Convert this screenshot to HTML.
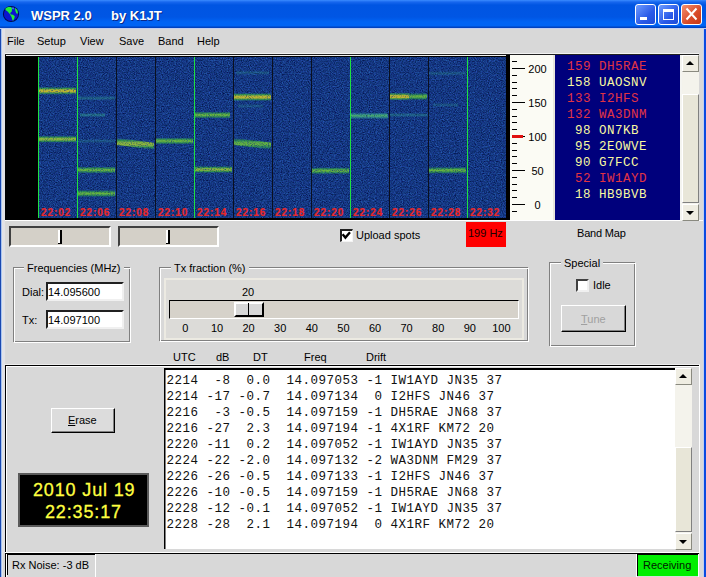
<!DOCTYPE html>
<html><head><meta charset="utf-8"><style>
*{box-sizing:border-box}
html,body{margin:0;padding:0}
body{width:706px;height:577px;overflow:hidden;position:relative;background:#d8d8d8;font-family:"Liberation Sans",sans-serif;font-size:11px;color:#000}
.a{position:absolute}
.t{position:absolute;white-space:pre;line-height:1}
.m{font-family:"Liberation Mono",monospace}
.lbl{font-family:"Liberation Sans",sans-serif;font-weight:bold;font-size:10px;letter-spacing:0.95px;color:#e82828;-webkit-text-stroke:0.2px #e82828}
</style></head><body>
<div class="a" style="left:0;top:0;width:706px;height:29px;background:linear-gradient(#3b8cff 0px,#1767ee 2px,#0055e2 5px,#0056e4 17px,#0063f4 22px,#0064f4 26px,#0042c0 27px,#0042c0 28px,#c2cdf0 28px,#c2cdf0 29px)"></div>
<div class="a" style="left:0px;top:29px;width:1px;height:548px;background:#1a48b0;"></div>
<div class="a" style="left:1px;top:29px;width:1px;height:548px;background:#a8c4f0;"></div>
<div class="a" style="left:2px;top:29px;width:3px;height:548px;background:#e2e2e6;"></div>
<div class="a" style="left:704px;top:29px;width:2px;height:548px;background:#0a4ae0;"></div>
<div class="a" style="left:703px;top:29px;width:1px;height:548px;background:#c0d0f0;"></div>
<div class="a" style="left:700px;top:29px;width:3px;height:548px;background:#d8d8d8;"></div>
<svg class="a" style="left:2px;top:5px" width="18" height="18" viewBox="0 0 18 18">
<circle cx="9" cy="9" r="8.1" fill="#000a50"/>
<circle cx="9" cy="9" r="7.1" fill="#0a14d0"/>
<path d="M3.4 3.6 L6 1.9 L9 1.9 L10 3.6 L9.8 6.6 L8.6 7.6 L8.2 8.4 L8.8 9.4 L11 9.8 L12.8 11.2 L12.4 13.2 L11 16 L10.2 14.4 L9.4 11.8 L7.4 8.6 L5.6 6.4 L3.6 5 Z" fill="#22ee3a"/>
<path d="M12.8 2.8 L15.4 5 L16 8.6 L14.4 8.6 L13.4 6 Z" fill="#22ee3a"/>
<path d="M10.4 2.4 L11.8 2.8 L11.2 4.4 L10.6 4 Z" fill="#70c0ff"/>
</svg>
<div class="t" style="left:31px;top:9px;font-size:13px;font-weight:bold;color:#fff;text-shadow:1px 1px 0 #0a2a8a">WSPR 2.0</div>
<div class="t" style="left:111px;top:9px;font-size:13px;font-weight:bold;color:#fff;text-shadow:1px 1px 0 #0a2a8a">by K1JT</div>
<div class="a" style="left:635px;top:4px;width:21px;height:21px;border:1px solid #fff;border-radius:3px;background:linear-gradient(135deg,#6e9cff,#2a5ae8 60%,#1d4cd8)"></div>
<div class="a" style="left:658px;top:4px;width:21px;height:21px;border:1px solid #fff;border-radius:3px;background:linear-gradient(135deg,#6e9cff,#2a5ae8 60%,#1d4cd8)"></div>
<div class="a" style="left:681px;top:4px;width:21px;height:21px;border:1px solid #fff;border-radius:3px;background:linear-gradient(135deg,#f49070,#d84a28 60%,#c83818)"></div>
<div class="a" style="left:640px;top:17px;width:7px;height:3px;background:#fff;"></div>
<div class="a" style="left:663px;top:9px;width:11px;height:11px;border:1px solid #fff;border-top:3px solid #fff"></div>
<svg class="a" style="left:681px;top:4px" width="21" height="21"><path d="M5.5 4.5 L15.5 15.5 M15.5 4.5 L5.5 15.5" stroke="#fff" stroke-width="2"/></svg>
<div class="t" style="left:7px;top:36px;">File</div>
<div class="t" style="left:37px;top:36px;">Setup</div>
<div class="t" style="left:80px;top:36px;">View</div>
<div class="t" style="left:119px;top:36px;">Save</div>
<div class="t" style="left:158px;top:36px;">Band</div>
<div class="t" style="left:197px;top:36px;">Help</div>
<div class="a" style="left:5px;top:53px;width:694px;height:1px;background:#f2f2f2;"></div>
<div class="a" style="left:5px;top:54px;width:694px;height:1px;background:#202020;"></div>
<div class="a" style="left:5px;top:55px;width:505px;height:165px;background:#000;"></div>
<div class="a" style="left:6px;top:55px;width:500px;height:1px;background:#f0f0f0;"></div>
<div class="a" style="left:39px;top:57px;width:467px;height:161px;background:#163a87;"></div>
<svg class="a" style="left:39px;top:57px" width="467" height="161"><filter id="nz" color-interpolation-filters="sRGB" x="0" y="0" width="100%" height="100%"><feTurbulence type="fractalNoise" baseFrequency="0.85" numOctaves="2" seed="7" stitchTiles="stitch"/><feColorMatrix type="matrix" values="0.2 0 0 0 -0.02  0.38 0.14 0 0 -0.045  0.6 0 0 0 0.205  0 0 0 0 1"/></filter><rect width="467" height="161" filter="url(#nz)"/></svg>
<svg class="a" style="left:0;top:0" width="706" height="230"><defs><linearGradient id="g3" x1="0" y1="0" x2="0" y2="1"><stop offset="0" stop-color="#32aa46" stop-opacity="0"/><stop offset=".2" stop-color="#40b43a" stop-opacity=".85"/><stop offset=".38" stop-color="#c8c82a" stop-opacity="1"/><stop offset=".62" stop-color="#d8c426" stop-opacity="1"/><stop offset=".8" stop-color="#40b43a" stop-opacity=".85"/><stop offset="1" stop-color="#32aa46" stop-opacity="0"/></linearGradient><linearGradient id="g2" x1="0" y1="0" x2="0" y2="1"><stop offset="0" stop-color="#32aa46" stop-opacity="0"/><stop offset=".2" stop-color="#3cb43c" stop-opacity=".8"/><stop offset=".4" stop-color="#9cc834" stop-opacity="1"/><stop offset=".6" stop-color="#9cc834" stop-opacity="1"/><stop offset=".8" stop-color="#3cb43c" stop-opacity=".8"/><stop offset="1" stop-color="#32aa46" stop-opacity="0"/></linearGradient><linearGradient id="g1" x1="0" y1="0" x2="0" y2="1"><stop offset="0" stop-color="#32aa46" stop-opacity="0"/><stop offset=".22" stop-color="#38b040" stop-opacity=".75"/><stop offset=".42" stop-color="#70c438" stop-opacity="1"/><stop offset=".58" stop-color="#70c438" stop-opacity="1"/><stop offset=".78" stop-color="#38b040" stop-opacity=".75"/><stop offset="1" stop-color="#32aa46" stop-opacity="0"/></linearGradient><linearGradient id="tm" x1="0" y1="0" x2="0" y2="1"><stop offset="0" stop-color="#30a8a0" stop-opacity="0"/><stop offset=".3" stop-color="#40b088" stop-opacity=".8"/><stop offset=".5" stop-color="#58c468" stop-opacity="1"/><stop offset=".7" stop-color="#40b088" stop-opacity=".8"/><stop offset="1" stop-color="#30a8a0" stop-opacity="0"/></linearGradient><linearGradient id="f1" x1="0" y1="0" x2="0" y2="1"><stop offset=".15" stop-color="#30a8a0" stop-opacity="0"/><stop offset=".5" stop-color="#38b090" stop-opacity="0.35"/><stop offset=".85" stop-color="#30a8a0" stop-opacity="0"/></linearGradient><linearGradient id="f2" x1="0" y1="0" x2="0" y2="1"><stop offset=".15" stop-color="#30a8a0" stop-opacity="0"/><stop offset=".5" stop-color="#38b090" stop-opacity="0.5"/><stop offset=".85" stop-color="#30a8a0" stop-opacity="0"/></linearGradient><linearGradient id="f3" x1="0" y1="0" x2="0" y2="1"><stop offset=".15" stop-color="#30a8a0" stop-opacity="0"/><stop offset=".5" stop-color="#38b090" stop-opacity="0.65"/><stop offset=".85" stop-color="#30a8a0" stop-opacity="0"/></linearGradient><filter id="sm" x="0" y="0" width="100%" height="100%" color-interpolation-filters="sRGB"><feTurbulence type="fractalNoise" baseFrequency="0.95" numOctaves="1" seed="11" result="t"/><feColorMatrix in="t" type="matrix" values="0 0 0 0 0  0 0 0 0 0  0 0 0 0 0  2.4 0 0 0 -0.25" result="m"/><feComposite in="SourceGraphic" in2="m" operator="in"/></filter></defs><g filter="url(#sm)" opacity=".88"><rect x="39" y="86.8" width="37" height="8" fill="url(#g3)"/><rect x="39" y="135.7" width="37" height="7" fill="url(#g2)"/><rect x="78" y="94.7" width="37" height="7" fill="url(#f2)"/><rect x="80" y="111.5" width="25" height="7" fill="url(#f3)"/><rect x="78" y="137.5" width="37" height="7" fill="url(#f1)"/><rect x="78" y="166.5" width="37" height="7" fill="url(#g1)"/><rect x="78" y="190.0" width="37" height="7" fill="url(#g1)"/><path d="M117 138.1 L154 142.7 L154 149.7 L117 145.1 Z" fill="url(#g2)"/><rect x="156" y="137.5" width="37" height="7" fill="url(#g1)"/><rect x="195" y="111.5" width="35" height="7" fill="url(#g1)"/><rect x="195" y="166.0" width="37" height="7" fill="url(#g2)"/><rect x="234" y="93.0" width="37" height="8" fill="url(#g3)"/><rect x="238" y="102.5" width="25" height="7" fill="url(#f1)"/><rect x="236" y="69.2" width="33" height="7" fill="url(#f1)"/><path d="M234 138.0 L271 142.5 L271 149.5 L234 145.0 Z" fill="url(#g1)"/><rect x="312" y="167.2" width="37" height="7" fill="url(#g1)"/><rect x="351" y="112.3" width="37" height="7" fill="url(#tm)"/><rect x="390" y="92.5" width="19" height="8" fill="url(#g3)"/><rect x="409" y="93.0" width="18" height="7" fill="url(#g1)"/><rect x="390" y="111.5" width="37" height="7" fill="url(#f2)"/><rect x="429" y="69.9" width="37" height="7" fill="url(#f1)"/><rect x="433" y="101.5" width="25" height="7" fill="url(#f1)"/><rect x="429" y="166.8" width="37" height="7" fill="url(#g1)"/></g></svg>
<div class="a" style="left:38px;top:57px;width:1px;height:161px;background:#1fe040;"></div>
<div class="a" style="left:77px;top:57px;width:1px;height:161px;background:#1fe040;"></div>
<div class="a" style="left:116px;top:57px;width:1px;height:161px;background:#0a1020;"></div>
<div class="a" style="left:155px;top:57px;width:1px;height:161px;background:#0a1020;"></div>
<div class="a" style="left:194px;top:57px;width:1px;height:161px;background:#1fe040;"></div>
<div class="a" style="left:233px;top:57px;width:1px;height:161px;background:#0a1020;"></div>
<div class="a" style="left:272px;top:57px;width:1px;height:161px;background:#0a1020;"></div>
<div class="a" style="left:311px;top:57px;width:1px;height:161px;background:#0a1020;"></div>
<div class="a" style="left:350px;top:57px;width:1px;height:161px;background:#1fe040;"></div>
<div class="a" style="left:389px;top:57px;width:1px;height:161px;background:#0a1020;"></div>
<div class="a" style="left:428px;top:57px;width:1px;height:161px;background:#0a1020;"></div>
<div class="a" style="left:467px;top:57px;width:1px;height:161px;background:#1fe040;"></div>
<div class="t lbl" style="left:41px;top:208px">22:02</div>
<div class="t lbl" style="left:80px;top:208px">22:06</div>
<div class="t lbl" style="left:119px;top:208px">22:08</div>
<div class="t lbl" style="left:158px;top:208px">22:10</div>
<div class="t lbl" style="left:197px;top:208px">22:14</div>
<div class="t lbl" style="left:236px;top:208px">22:16</div>
<div class="t lbl" style="left:275px;top:208px">22:18</div>
<div class="t lbl" style="left:314px;top:208px">22:20</div>
<div class="t lbl" style="left:353px;top:208px">22:24</div>
<div class="t lbl" style="left:392px;top:208px">22:26</div>
<div class="t lbl" style="left:431px;top:208px">22:28</div>
<div class="t lbl" style="left:470px;top:208px">22:32</div>
<div class="a" style="left:5px;top:220px;width:698px;height:1px;background:#ffffff;"></div>
<div class="a" style="left:510px;top:55px;width:45px;height:165px;background:#fbfbf4;"></div>
<div class="a" style="left:553px;top:55px;width:2px;height:165px;background:#e8e6dc;"></div>
<div class="a" style="left:512px;top:211px;width:5px;height:1px;background:#000;"></div>
<div class="a" style="left:512px;top:204px;width:13px;height:1px;background:#000;"></div>
<div class="a" style="left:512px;top:197px;width:5px;height:1px;background:#000;"></div>
<div class="a" style="left:512px;top:190px;width:5px;height:1px;background:#000;"></div>
<div class="a" style="left:512px;top:184px;width:5px;height:1px;background:#000;"></div>
<div class="a" style="left:512px;top:177px;width:5px;height:1px;background:#000;"></div>
<div class="a" style="left:512px;top:170px;width:13px;height:1px;background:#000;"></div>
<div class="a" style="left:512px;top:163px;width:5px;height:1px;background:#000;"></div>
<div class="a" style="left:512px;top:156px;width:5px;height:1px;background:#000;"></div>
<div class="a" style="left:512px;top:150px;width:5px;height:1px;background:#000;"></div>
<div class="a" style="left:512px;top:143px;width:5px;height:1px;background:#000;"></div>
<div class="a" style="left:512px;top:135px;width:11px;height:3px;background:#e01010;"></div>
<div class="a" style="left:523px;top:136px;width:2px;height:1px;background:#000;"></div>
<div class="a" style="left:512px;top:129px;width:5px;height:1px;background:#000;"></div>
<div class="a" style="left:512px;top:122px;width:5px;height:1px;background:#000;"></div>
<div class="a" style="left:512px;top:116px;width:5px;height:1px;background:#000;"></div>
<div class="a" style="left:512px;top:109px;width:5px;height:1px;background:#000;"></div>
<div class="a" style="left:512px;top:102px;width:13px;height:1px;background:#000;"></div>
<div class="a" style="left:512px;top:95px;width:5px;height:1px;background:#000;"></div>
<div class="a" style="left:512px;top:88px;width:5px;height:1px;background:#000;"></div>
<div class="a" style="left:512px;top:82px;width:5px;height:1px;background:#000;"></div>
<div class="a" style="left:512px;top:75px;width:5px;height:1px;background:#000;"></div>
<div class="a" style="left:512px;top:68px;width:13px;height:1px;background:#000;"></div>
<div class="a" style="left:512px;top:61px;width:5px;height:1px;background:#000;"></div>
<div class="t" style="left:517.5px;width:40px;text-align:center;top:63.9px">200</div>
<div class="t" style="left:517.5px;width:40px;text-align:center;top:97.9px">150</div>
<div class="t" style="left:517.5px;width:40px;text-align:center;top:131.9px">100</div>
<div class="t" style="left:517.5px;width:40px;text-align:center;top:165.9px">50</div>
<div class="t" style="left:517.5px;width:40px;text-align:center;top:199.9px">0</div>
<div class="a" style="left:555px;top:55px;width:125px;height:165px;background:#00007c;"></div>
<div class="a" style="left:680px;top:55px;width:2px;height:166px;background:#f4f4f0;"></div>
<div class="t m" style="left:567px;top:60.5px;font-size:12.5px;letter-spacing:0.5px;color:#e03444">159 DH5RAE</div>
<div class="t m" style="left:567px;top:76.5px;font-size:12.5px;letter-spacing:0.5px;color:#f8f8a0">158 UAOSNV</div>
<div class="t m" style="left:567px;top:92.5px;font-size:12.5px;letter-spacing:0.5px;color:#e03444">133 I2HFS</div>
<div class="t m" style="left:567px;top:108.5px;font-size:12.5px;letter-spacing:0.5px;color:#e03444">132 WA3DNM</div>
<div class="t m" style="left:567px;top:124.5px;font-size:12.5px;letter-spacing:0.5px;color:#f8f8a0"> 98 ON7KB</div>
<div class="t m" style="left:567px;top:140.5px;font-size:12.5px;letter-spacing:0.5px;color:#f8f8a0"> 95 2EOWVE</div>
<div class="t m" style="left:567px;top:156.5px;font-size:12.5px;letter-spacing:0.5px;color:#f8f8a0"> 90 G7FCC</div>
<div class="t m" style="left:567px;top:172.5px;font-size:12.5px;letter-spacing:0.5px;color:#e03444"> 52 IW1AYD</div>
<div class="t m" style="left:567px;top:188.5px;font-size:12.5px;letter-spacing:0.5px;color:#f8f8a0"> 18 HB9BVB</div>
<div class="a" style="left:682px;top:55px;width:17px;height:166px;background:#f4f3ec"></div>
<div class="a" style="left:682px;top:55px;width:17px;height:17px;background:#efede2;border:1px solid;border-color:#fff #8a8a80 #8a8a80 #fff"></div>
<svg class="a" style="left:686px;top:60px" width="8" height="6"><path d="M0 5 L4 1 L8 5Z" fill="#000"/></svg>
<div class="a" style="left:682px;top:204px;width:17px;height:17px;background:#efede2;border:1px solid;border-color:#fff #8a8a80 #8a8a80 #fff"></div>
<svg class="a" style="left:686px;top:210px" width="8" height="6"><path d="M0 1 L4 5 L8 1Z" fill="#000"/></svg>
<div class="a" style="left:682px;top:94px;width:17px;height:109px;background:#e8e6d8;border:1px solid;border-color:#fff #808080 #808080 #fff"></div>
<div class="a" style="left:9px;top:226px;width:102px;height:21px;background:#d4d0c8;border:2px solid;border-color:#404040 #fff #fff #404040"></div>
<div class="a" style="left:58px;top:230px;width:2px;height:14px;background:#fff;"></div>
<div class="a" style="left:60px;top:230px;width:2px;height:14px;background:#000;"></div>
<div class="a" style="left:58px;top:243px;width:4px;height:1px;background:#000;"></div>
<div class="a" style="left:118px;top:226px;width:101px;height:21px;background:#d4d0c8;border:2px solid;border-color:#404040 #fff #fff #404040"></div>
<div class="a" style="left:166px;top:230px;width:2px;height:14px;background:#fff;"></div>
<div class="a" style="left:168px;top:230px;width:2px;height:14px;background:#000;"></div>
<div class="a" style="left:166px;top:243px;width:4px;height:1px;background:#000;"></div>
<div class="a" style="left:340px;top:229px;width:13px;height:13px;background:#fff;border:2px solid;border-color:#202020 #f4f4f4 #f4f4f4 #202020;border-right-width:1px;border-bottom-width:1px"></div>
<svg class="a" style="left:340px;top:229px" width="13" height="13"><path d="M2.6 5.2 L5.4 8.6 L10 3.2" stroke="#000" stroke-width="2.3" fill="none"/></svg>
<div class="t" style="left:356px;top:230px;">Upload spots</div>
<div class="a" style="left:466px;top:222px;width:40px;height:25px;background:#ff0000;"></div>
<div class="t" style="left:468px;top:228px;color:#200000">199 Hz</div>
<div class="t" style="left:577px;top:228px;letter-spacing:-0.2px">Band Map</div>
<div class="a" style="left:13px;top:267px;width:117px;height:75px;border:1px solid #808080"></div>
<div class="a" style="left:14px;top:268px;width:117px;height:75px;border:1px solid #fff;border-right-color:#fff"></div>
<div class="t" style="left:24px;top:263px;padding:0 3px;background:#d8d8d8">Frequencies (MHz)</div>
<div class="a" style="left:159px;top:267px;width:369px;height:74px;border:1px solid #808080"></div>
<div class="a" style="left:160px;top:268px;width:369px;height:74px;border:1px solid #fff;border-right-color:#fff"></div>
<div class="t" style="left:171px;top:263px;padding:0 3px;background:#d8d8d8">Tx fraction (%)</div>
<div class="a" style="left:549px;top:262px;width:86px;height:84px;border:1px solid #808080"></div>
<div class="a" style="left:550px;top:263px;width:86px;height:84px;border:1px solid #fff;border-right-color:#fff"></div>
<div class="t" style="left:561px;top:258px;padding:0 3px;background:#d8d8d8">Special</div>
<div class="t" style="left:22px;top:287px;">Dial:</div>
<div class="t" style="left:22px;top:315px;">Tx:</div>
<div class="a" style="left:46px;top:282px;width:78px;height:19px;background:#fff;border:2px solid;border-color:#202020 #f0f0f0 #f0f0f0 #202020"></div>
<div class="t" style="left:48px;top:287px;">14.095600</div>
<div class="a" style="left:46px;top:310px;width:78px;height:19px;background:#fff;border:2px solid;border-color:#202020 #f0f0f0 #f0f0f0 #202020"></div>
<div class="t" style="left:48px;top:315px;">14.097100</div>
<div class="a" style="left:164px;top:278px;width:360px;height:62px;background:#dcdbd8;border:2px solid #eceae2"></div>
<div class="t" style="left:242px;top:287px;">20</div>
<div class="a" style="left:169px;top:300px;width:350px;height:19px;background:#d6d2ca;border:1px solid;border-color:#000 #fff #fff #000"></div>
<div class="a" style="left:234px;top:302px;width:30px;height:15px;background:#d8d8d8;border:2px solid;border-color:#fff #000 #000 #fff"></div>
<div class="a" style="left:248px;top:303px;width:1px;height:12px;background:#000;"></div>
<div class="t" style="left:165.4px;width:40px;text-align:center;top:323px">0</div>
<div class="t" style="left:197.0px;width:40px;text-align:center;top:323px">10</div>
<div class="t" style="left:228.6px;width:40px;text-align:center;top:323px">20</div>
<div class="t" style="left:260.2px;width:40px;text-align:center;top:323px">30</div>
<div class="t" style="left:291.8px;width:40px;text-align:center;top:323px">40</div>
<div class="t" style="left:323.4px;width:40px;text-align:center;top:323px">50</div>
<div class="t" style="left:355.0px;width:40px;text-align:center;top:323px">60</div>
<div class="t" style="left:386.6px;width:40px;text-align:center;top:323px">70</div>
<div class="t" style="left:418.2px;width:40px;text-align:center;top:323px">80</div>
<div class="t" style="left:449.8px;width:40px;text-align:center;top:323px">90</div>
<div class="t" style="left:481.4px;width:40px;text-align:center;top:323px">100</div>
<div class="a" style="left:576px;top:279px;width:13px;height:13px;background:#fff;border:2px solid;border-color:#404040 #f0f0f0 #f0f0f0 #404040"></div>
<div class="t" style="left:593px;top:280px;">Idle</div>
<div class="a" style="left:561px;top:305px;width:65px;height:27px;background:#d8d8d8;border:1px solid;border-color:#fff #000 #000 #fff;box-shadow:inset -1px -1px 0 #808080"></div>
<div class="t" style="left:581px;top:314px;color:#a0a0a0"><u>T</u>une</div>
<div class="t" style="left:173px;top:352px;">UTC</div>
<div class="t" style="left:216px;top:352px;">dB</div>
<div class="t" style="left:253px;top:352px;">DT</div>
<div class="t" style="left:304px;top:352px;">Freq</div>
<div class="t" style="left:366px;top:352px;">Drift</div>
<div class="a" style="left:4px;top:364px;width:696px;height:1px;background:#eeeeee;"></div>
<div class="a" style="left:5px;top:365px;width:694px;height:1px;background:#000;"></div>
<div class="a" style="left:6px;top:366px;width:693px;height:1px;background:#fff;"></div>
<div class="a" style="left:5px;top:365px;width:1px;height:187px;background:#000;"></div>
<div class="a" style="left:6px;top:366px;width:1px;height:186px;background:#fff;"></div>
<div class="a" style="left:699px;top:365px;width:1px;height:188px;background:#fff;"></div>
<div class="a" style="left:5px;top:552px;width:695px;height:1px;background:#fff;"></div>
<div class="a" style="left:51px;top:408px;width:64px;height:25px;background:#dcdcdc;border:1px solid;border-color:#fff #000 #000 #fff;box-shadow:inset -1px -1px 0 #808080"></div>
<div class="t" style="left:68px;top:415px;"><u>E</u>rase</div>
<div class="a" style="left:18px;top:473px;width:131px;height:54px;background:#000;border:2px solid #5a5a5a"></div>
<div class="t" style="left:33px;top:481px;font-size:18px;letter-spacing:0.85px;color:#ffff40;-webkit-text-stroke:0.3px #ffff40">2010 Jul 19</div>
<div class="t" style="left:45px;top:503px;font-size:18px;letter-spacing:0.85px;color:#ffff40;-webkit-text-stroke:0.3px #ffff40">22:35:17</div>
<div class="a" style="left:164px;top:368px;width:511px;height:181px;background:#fff;border-top:2px solid #000;border-left:1px solid #000;box-shadow:inset 1px 0 0 #808080"></div>
<div class="t m" style="left:166.5px;top:374.5px;font-size:12.5px;letter-spacing:0.5px;color:#111">2214  -8  0.0  14.097053 -1 IW1AYD JN35 37</div>
<div class="t m" style="left:166.5px;top:390.5px;font-size:12.5px;letter-spacing:0.5px;color:#111">2214 -17 -0.7  14.097134  0 I2HFS JN46 37</div>
<div class="t m" style="left:166.5px;top:406.5px;font-size:12.5px;letter-spacing:0.5px;color:#111">2216  -3 -0.5  14.097159 -1 DH5RAE JN68 37</div>
<div class="t m" style="left:166.5px;top:422.5px;font-size:12.5px;letter-spacing:0.5px;color:#111">2216 -27  2.3  14.097194 -1 4X1RF KM72 20</div>
<div class="t m" style="left:166.5px;top:438.5px;font-size:12.5px;letter-spacing:0.5px;color:#111">2220 -11  0.2  14.097052 -1 IW1AYD JN35 37</div>
<div class="t m" style="left:166.5px;top:454.5px;font-size:12.5px;letter-spacing:0.5px;color:#111">2224 -22 -2.0  14.097132 -2 WA3DNM FM29 37</div>
<div class="t m" style="left:166.5px;top:470.5px;font-size:12.5px;letter-spacing:0.5px;color:#111">2226 -26 -0.5  14.097133 -1 I2HFS JN46 37</div>
<div class="t m" style="left:166.5px;top:486.5px;font-size:12.5px;letter-spacing:0.5px;color:#111">2226 -10 -0.5  14.097159 -1 DH5RAE JN68 37</div>
<div class="t m" style="left:166.5px;top:502.5px;font-size:12.5px;letter-spacing:0.5px;color:#111">2228 -12 -0.1  14.097052 -1 IW1AYD JN35 37</div>
<div class="t m" style="left:166.5px;top:518.5px;font-size:12.5px;letter-spacing:0.5px;color:#111">2228 -28  2.1  14.097194  0 4X1RF KM72 20</div>
<div class="a" style="left:675px;top:368px;width:17px;height:182px;background:#f4f3ec"></div>
<div class="a" style="left:675px;top:368px;width:17px;height:17px;background:#efede2;border:1px solid;border-color:#fff #8a8a80 #8a8a80 #fff"></div>
<svg class="a" style="left:679px;top:373px" width="8" height="6"><path d="M0 5 L4 1 L8 5Z" fill="#000"/></svg>
<div class="a" style="left:675px;top:533px;width:17px;height:17px;background:#efede2;border:1px solid;border-color:#fff #8a8a80 #8a8a80 #fff"></div>
<svg class="a" style="left:679px;top:539px" width="8" height="6"><path d="M0 1 L4 5 L8 1Z" fill="#000"/></svg>
<div class="a" style="left:675px;top:447px;width:17px;height:85px;background:#e8e6d8;border:1px solid;border-color:#fff #808080 #808080 #fff"></div>
<div class="a" style="left:3px;top:553px;width:700px;height:24px;background:#d8d8d8;"></div>
<div class="a" style="left:5px;top:553px;width:694px;height:1px;background:#000;"></div>
<div class="a" style="left:5px;top:554px;width:90px;height:1px;background:#000;"></div>
<div class="a" style="left:5px;top:553px;width:1px;height:24px;background:#000;"></div>
<div class="a" style="left:6px;top:554px;width:1px;height:23px;background:#fff;"></div>
<div class="a" style="left:7px;top:554px;width:1px;height:21px;background:#000;"></div>
<div class="a" style="left:95px;top:554px;width:1px;height:23px;background:#fff;"></div>
<div class="t" style="left:12px;top:560px;">Rx Noise: -3 dB</div>
<div class="a" style="left:636px;top:554px;width:1px;height:23px;background:#fff;"></div>
<div class="a" style="left:637px;top:553px;width:61px;height:23px;background:#00ee00;"></div>
<div class="a" style="left:637px;top:553px;width:61px;height:2px;background:#000;"></div>
<div class="a" style="left:637px;top:553px;width:1px;height:23px;background:#000;"></div>
<div class="a" style="left:698px;top:554px;width:1px;height:23px;background:#fff;"></div>
<div class="t" style="left:643px;top:560px;color:#002000">Receiving</div>
</body></html>
